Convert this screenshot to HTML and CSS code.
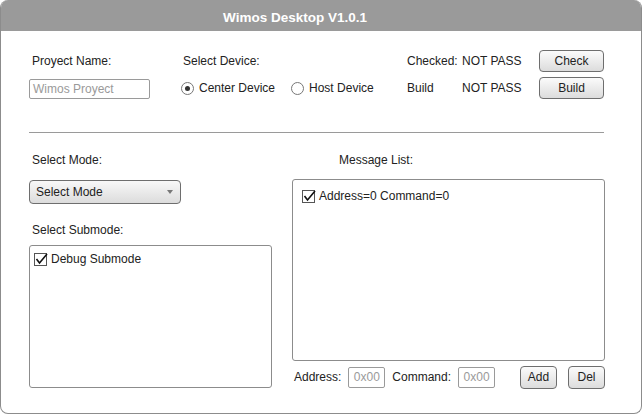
FILE: index.html
```html
<!DOCTYPE html>
<html>
<head>
<meta charset="utf-8">
<link rel="stylesheet" href="styles.css">
</head>
<body>
<div class="window">
  <div class="titlebar">Wimos Desktop V1.0.1</div>
  <div class="content">
    <div class="top">
      <div class="lbl pad">Proyect Name:</div>
      <div class="lbl pad2">Select Device:</div>
      <div class="lbl">Checked:</div>
      <div class="lbl">NOT PASS</div>
      <div class="cell"><button class="btn wide">Check</button></div>

      <div class="cell"><div class="input name">Wimos Proyect</div></div>
      <div class="cell radios">
        <span class="radio on"></span><span class="rlabel">Center Device</span>
        <span class="radio"></span><span class="rlabel">Host Device</span>
      </div>
      <div class="lbl">Build</div>
      <div class="lbl">NOT PASS</div>
      <div class="cell"><button class="btn wide">Build</button></div>
    </div>

    <div class="sep"></div>

    <div class="lower">
      <div class="leftcol">
        <div class="lbl2 pad">Select Mode:</div>
        <div class="select"><span>Select Mode</span><span class="arrow"></span></div>
        <div class="lbl2 pad sub">Select Submode:</div>
        <div class="listbox sublist">
          <div class="item">
            <svg class="chk" width="14" height="14" viewBox="0 0 14 14"><rect x="0.5" y="1.5" width="12" height="12" fill="#fff" stroke="#555"/><polyline points="2.5,7 5.5,11 13,2" fill="none" stroke="#111" stroke-width="1.6"/></svg>
            <span>Debug Submode</span>
          </div>
        </div>
      </div>
      <div class="rightcol">
        <div class="lbl2 msg">Message List:</div>
        <div class="listbox msglist">
          <div class="item">
            <svg class="chk" width="14" height="14" viewBox="0 0 14 14"><rect x="0.5" y="1.5" width="12" height="12" fill="#fff" stroke="#555"/><polyline points="2.5,7 5.5,11 13,2" fill="none" stroke="#111" stroke-width="1.6"/></svg>
            <span>Address=0 Command=0</span>
          </div>
        </div>
        <div class="bottom">
          <span class="blabel">Address:</span>
          <div class="input small">0x00</div>
          <span class="blabel cmd">Command:</span>
          <div class="input small">0x00</div>
          <button class="btn small add">Add</button>
          <button class="btn small del">Del</button>
        </div>
      </div>
    </div>
  </div>
</div>
</body>
</html>
```

FILE: styles.css
```css
html, body {
  margin: 0;
  padding: 0;
  background: #fff;
}
body {
  font-family: "Liberation Sans", Arial, sans-serif;
  font-size: 12px;
  color: #222;
}
.window {
  width: 640px;
  height: 413px;
  border: 1px solid #8c8c8c;
  border-top: none;
  border-radius: 8px 8px 8px 8px;
  overflow: hidden;
  box-sizing: content-box;
  display: flex;
  flex-direction: column;
}
.titlebar {
  height: 31px;
  background: #9a9a9a;
  color: #fff;
  font-weight: bold;
  font-size: 13.5px;
  line-height: 36px;
  text-align: center;
  padding-right: 52px;
  flex: none;
}
.content {
  padding: 19px 0 0 28px;
}
.top {
  display: grid;
  grid-template-columns: 152px 226px 55px 77px 65px;
  grid-template-rows: 22px 22px;
  row-gap: 5px;
}
.lbl {
  display: flex;
  align-items: center;
}
.pad { padding-left: 3px; }
.pad2 { padding-left: 2px; }
.cell {
  display: flex;
  align-items: center;
}
.btn {
  font-family: "Liberation Sans", Arial, sans-serif;
  font-size: 12px;
  color: #222;
  background: linear-gradient(#fbfbfb, #dcdcdc);
  border: 1px solid #6e6e6e;
  border-radius: 4px;
  padding: 0;
  height: 22px;
  margin: 0;
}
.wide { width: 65px; }
.input {
  border: 1px solid #9a9a9a;
  border-radius: 2px;
  color: #9a9a9a;
  box-sizing: border-box;
  display: flex;
  align-items: center;
}
.name {
  width: 121px;
  height: 20px;
  padding-left: 3px;
  margin-top: 1px;
}
.radios {
  display: flex;
  align-items: center;
}
.radio {
  width: 11px;
  height: 11px;
  border: 1px solid #777;
  border-radius: 50%;
  box-sizing: content-box;
  display: flex;
  align-items: center;
  justify-content: center;
  flex: none;
  background: #fff;
}
.radio.on::after {
  content: "";
  width: 5px;
  height: 5px;
  border-radius: 50%;
  background: #333;
}
.rlabel {
  margin-left: 5px;
  margin-right: 16px;
}
.sep {
  margin-top: 33px;
  width: 575px;
  height: 1px;
  background: #9a9a9a;
}
.lower {
  display: flex;
  gap: 21px;
}
.leftcol {
  width: 242px;
  display: flex;
  flex-direction: column;
}
.rightcol {
  width: 312px;
  display: flex;
  flex-direction: column;
}
.lbl2 {
  height: 14px;
  line-height: 14px;
  margin-top: 20px;
}
.select {
  margin-top: 13px;
  width: 152px;
  height: 24px;
  box-sizing: border-box;
  border: 1px solid #6e6e6e;
  border-radius: 4px;
  background: linear-gradient(#f8f8f8, #dcdcdc);
  display: flex;
  align-items: center;
  justify-content: space-between;
  padding: 0 7px 0 6px;
}
.arrow {
  width: 0;
  height: 0;
  border-left: 3px solid transparent;
  border-right: 3px solid transparent;
  border-top: 4px solid #777;
}
.sub {
  margin-top: 19px;
}
.listbox {
  border: 1px solid #8c8c8c;
  border-radius: 3px;
  box-sizing: border-box;
  background: #fff;
}
.sublist {
  margin-top: 8px;
  width: 243px;
  height: 143px;
  padding: 6px 0 0 4px;
}
.item {
  display: flex;
  align-items: center;
}
.chk {
  flex: none;
  margin-right: 3px;
}
.msg {
  padding-left: 47px;
}
.msglist {
  margin-top: 12px;
  width: 313px;
  height: 182px;
  padding: 9px 0 0 9px;
}
.bottom {
  margin-top: 5px;
  display: flex;
  align-items: center;
  height: 22px;
  padding-left: 2px;
}
.small.input {
  width: 37px;
  height: 21px;
  justify-content: center;
  margin-left: 7px;
}
.cmd {
  margin-left: 7px;
}
.btn.small {
  width: 37px;
  height: 23px;
}
.add {
  margin-left: auto;
}
.del {
  margin-left: 11px;
  margin-right: -1px;
}
```
